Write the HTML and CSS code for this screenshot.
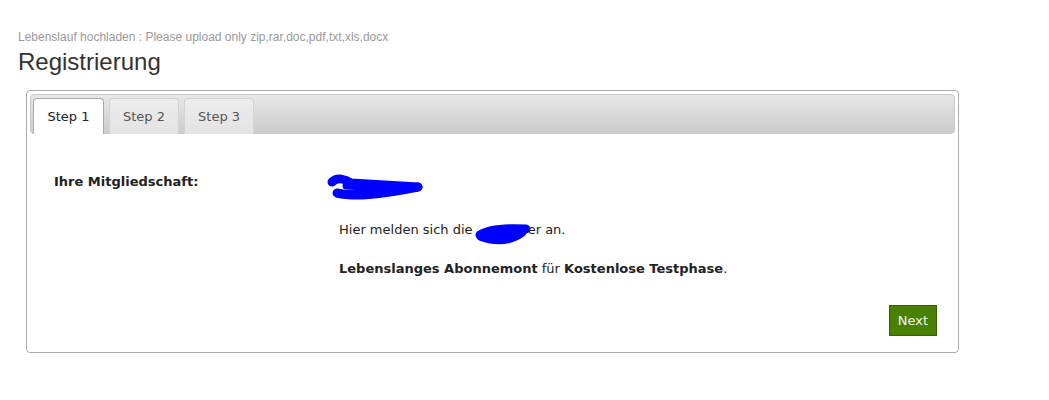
FILE: index.html
```html
<!DOCTYPE html>
<html lang="de">

<head>
    <meta charset="UTF-8">
    <meta name="viewport" content="width=device-width, initial-scale=1.0">
    <title>Registrierung</title>
    <link rel="stylesheet" href="styles.css">
</head>

<body>
    <p class="upload-note">Lebenslauf hochladen : Please upload only zip,rar,doc,pdf,txt,xls,docx</p>
    <h1>Registrierung</h1>

    <div class="tabs">
        <ul class="tab-nav">
            <li class="tab active">Step 1</li>
            <li class="tab">Step 2</li>
            <li class="tab">Step 3</li>
        </ul>

        <div class="tab-panel">
            <div class="row">
                <div class="label">Ihre Mitgliedschaft:</div>
                <div class="value">
                    <svg class="scribble-big" width="100" height="28" viewBox="0 0 100 28">
                        <path d="M6,8 C11,3 19,5 25,9 L92,13" fill="none" stroke="#0000ff" stroke-width="9" stroke-linecap="round" stroke-linejoin="round"/>
                        <path d="M11,19 C28,23 52,21 92,13" fill="none" stroke="#0000ff" stroke-width="9" stroke-linecap="round"/>
                        <path d="M20,12 L60,14 M30,16 L80,14" fill="none" stroke="#0000ff" stroke-width="7" stroke-linecap="round"/>
                    </svg>
                </div>
            </div>

            <p class="text">Hier melden sich die <svg class="scribble-small" width="56" height="22" viewBox="0 0 56 22">
                <path d="M5,11 C14,5 32,4 51,5" fill="none" stroke="#0000ff" stroke-width="9" stroke-linecap="round"/>
                <path d="M6,13 C20,18 34,18 47,9" fill="none" stroke="#0000ff" stroke-width="8" stroke-linecap="round"/>
                <path d="M10,12 L44,9" fill="none" stroke="#0000ff" stroke-width="7" stroke-linecap="round"/>
            </svg>er an.</p>

            <p class="text"><b>Lebenslanges Abonnemont</b> für <b>Kostenlose Testphase</b>.</p>

            <div class="actions">
                <button class="btn-next">Next</button>
            </div>
        </div>
    </div>
</body>

</html>
```

FILE: styles.css
```css
body {
    margin: 0;
    padding: 0 18px;
    background-color: #fff;
    color: #222;
    font-family: "DejaVu Sans", Verdana, sans-serif;
}

.upload-note {
    margin: 0;
    padding-top: 30px;
    font: 12px/14px "Liberation Sans", Arial, sans-serif;
    color: #999;
}

h1 {
    margin: 4px 0 0;
    font: normal 24px/28px "Liberation Sans", Arial, sans-serif;
    color: #333;
}

.tabs {
    box-sizing: border-box;
    width: 933px;
    margin: 14px 0 0 8px;
    padding: 3px;
    border: 1px solid #aaa;
    border-radius: 4px;
}

.tab-nav {
    display: flex;
    gap: 5px;
    height: 35px;
    margin: 0;
    padding: 3px 2px 0;
    list-style: none;
    border: 1px solid #c8c8c8;
    border-radius: 4px;
    background: linear-gradient(#e8e8e8, #cbcbcb);
}

.tab {
    box-sizing: border-box;
    height: 36px;
    padding: 0 13px;
    font-size: 13px;
    line-height: 35px;
    color: #555;
    border: 1px solid #d3d3d3;
    border-bottom: none;
    border-radius: 4px 4px 0 0;
    background: linear-gradient(#ededed, #e3e3e3);
}

.tab.active {
    padding: 0 13.5px;
    color: #212121;
    background: #fff;
    border-color: #aaa;
}

.tab-panel {
    padding: 40px 18px 13px 24px;
    font-size: 13px;
    line-height: 16px;
}

.row {
    display: flex;
}

.label {
    width: 285px;
    font-weight: bold;
}

.scribble-big {
    display: block;
    margin: 0 0 0 -13px;
    height: 28px;
}

.text {
    margin: 20px 0 0 285px;
}

.text + .text {
    margin-top: 20px;
}

.scribble-small {
    vertical-align: -7px;
    margin: -5px -3px -5px -2px;
}

.actions {
    display: flex;
    justify-content: flex-end;
    margin-top: 28px;
}

.btn-next {
    height: 31px;
    padding: 0 8px;
    font-family: "DejaVu Sans", Verdana, sans-serif;
    font-size: 13px;
    color: #eef4ff;
    background-color: #4a8000;
    border: 1px solid #366000;
    cursor: pointer;
}
```
